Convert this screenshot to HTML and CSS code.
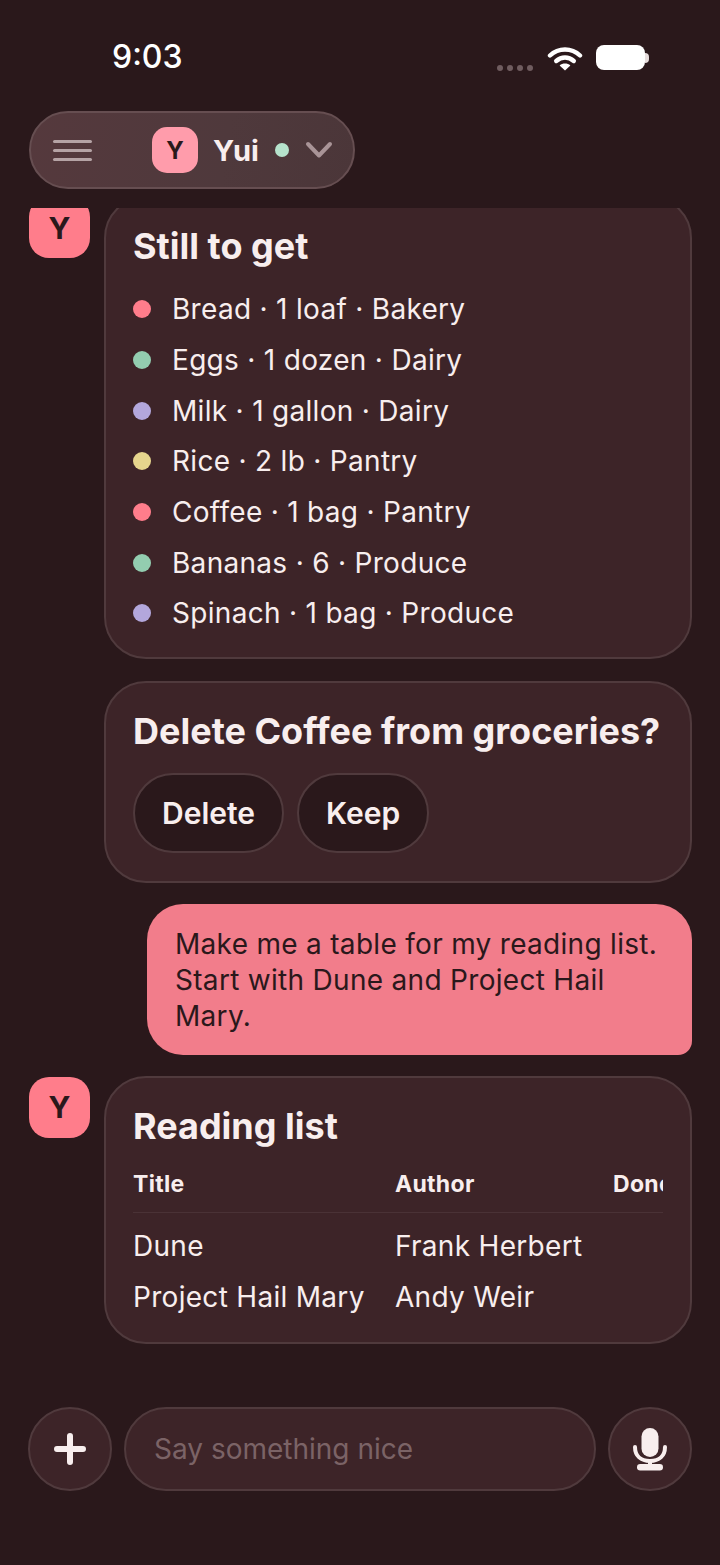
FILE: index.html
```html
<!DOCTYPE html>
<html lang="en">
<head>
    <meta charset="UTF-8">
    <meta name="viewport" content="width=device-width, initial-scale=1.0">
    <title>Yui</title>
    <link rel="stylesheet" href="styles.css">
</head>
<body>
    <div class="status-bar">
        <span class="time">9:03</span>
        <div class="status-icons">
            <div class="signal"><i></i><i></i><i></i><i></i></div>
            <svg class="wifi" width="36" height="26" viewBox="0 0 36 26">
                <path d="M3 10.5C11.5 2.5 24.5 2.5 33 10.5" fill="none" stroke="#fff" stroke-width="4.4" stroke-linecap="round"/>
                <path d="M9.2 16C14.5 11.3 21.5 11.3 26.8 16" fill="none" stroke="#fff" stroke-width="4.4" stroke-linecap="round"/>
                <path d="M18 25.5L12.6 20.4C15.6 17.9 20.4 17.9 23.4 20.4Z" fill="#fff"/>
            </svg>
            <div class="battery"><div class="battery-body"></div><div class="battery-nub"></div></div>
        </div>
    </div>

    <header class="top-bar">
        <div class="pill">
            <div class="menu-icon"><i></i><i></i><i></i></div>
            <div class="persona">
                <div class="persona-avatar">Y</div>
                <span class="persona-name">Yui</span>
                <span class="online-dot"></span>
                <svg class="chevron" width="28" height="18" viewBox="0 0 28 18">
                    <path d="M3 3L14 14.5L25 3" fill="none" stroke="#a99497" stroke-width="4" stroke-linecap="round" stroke-linejoin="round"/>
                </svg>
            </div>
        </div>
    </header>

    <main class="thread">
        <div class="thread-inner">
            <div class="msg">
                <div class="avatar">Y</div>
                <div class="card">
                    <h2>Still to get</h2>
                    <ul class="items">
                        <li><span class="bullet red"></span>Bread · 1 loaf · Bakery</li>
                        <li><span class="bullet green"></span>Eggs · 1 dozen · Dairy</li>
                        <li><span class="bullet purple"></span>Milk · 1 gallon · Dairy</li>
                        <li><span class="bullet yellow"></span>Rice · 2 lb · Pantry</li>
                        <li><span class="bullet red"></span>Coffee · 1 bag · Pantry</li>
                        <li><span class="bullet green"></span>Bananas · 6 · Produce</li>
                        <li><span class="bullet purple"></span>Spinach · 1 bag · Produce</li>
                    </ul>
                </div>
            </div>

            <div class="msg no-avatar">
                <div class="card">
                    <h2>Delete Coffee from groceries?</h2>
                    <div class="actions">
                        <button class="action">Delete</button>
                        <button class="action">Keep</button>
                    </div>
                </div>
            </div>

            <div class="bubble">Make me a table for my reading list. Start with Dune and Project Hail Mary.</div>

            <div class="msg">
                <div class="avatar">Y</div>
                <div class="card">
                    <h2>Reading list</h2>
                    <div class="table">
                        <div class="table-row table-head">
                            <span>Title</span><span>Author</span><span>Done</span>
                        </div>
                        <div class="table-row">
                            <span>Dune</span><span>Frank Herbert</span><span></span>
                        </div>
                        <div class="table-row">
                            <span>Project Hail Mary</span><span>Andy Weir</span><span></span>
                        </div>
                    </div>
                </div>
            </div>
        </div>
    </main>

    <footer class="composer">
        <button class="round-btn">
            <svg width="32" height="32" viewBox="0 0 32 32">
                <path d="M16 3V29M3 16H29" fill="none" stroke="#f8eeee" stroke-width="6" stroke-linecap="round"/>
            </svg>
        </button>
        <div class="input">Say something nice</div>
        <button class="round-btn">
            <svg width="36" height="44" viewBox="0 0 36 44">
                <rect x="9.5" y="1" width="17" height="29" rx="8.5" fill="#f8eeee"/>
                <path d="M3 20C3 29 9 34 18 34C27 34 33 29 33 20" fill="none" stroke="#f8eeee" stroke-width="4" stroke-linecap="round"/>
                <rect x="16" y="33" width="4" height="6" fill="#f8eeee"/>
                <rect x="5" y="37" width="26" height="6.5" rx="3.2" fill="#f8eeee"/>
            </svg>
        </button>
    </footer>
</body>
</html>
```

FILE: styles.css
```css
* {
    margin: 0;
    padding: 0;
    box-sizing: border-box;
}

body {
    width: 720px;
    height: 1565px;
    overflow: hidden;
    display: flex;
    flex-direction: column;
    background-color: #2a181b;
    color: #f8eeee;
    font-family: 'Inter', sans-serif;
    font-size: 28px;
}

/* Status bar */
.status-bar {
    height: 111px;
    padding: 39px 71px 0 112px;
    display: flex;
    justify-content: space-between;
    align-items: flex-start;
}

.time {
    font-size: 32px;
    line-height: 36px;
    font-weight: 500;
    color: #fff;
}

.status-icons {
    display: flex;
    align-items: flex-start;
    padding-top: 6px;
}

.signal {
    display: flex;
    gap: 4px;
    margin-top: 20px;
    margin-right: 14px;
}

.signal i {
    width: 6px;
    height: 6px;
    border-radius: 50%;
    background-color: #6f5c5f;
}

.wifi {
    margin-right: 13px;
}

.battery {
    display: flex;
    align-items: center;
}

.battery-body {
    width: 49px;
    height: 25px;
    border-radius: 8px;
    background-color: #fff;
}

.battery-nub {
    width: 4px;
    height: 10px;
    border-radius: 0 5px 5px 0;
    background-color: #e6dcdc;
}

/* Header pill */
.top-bar {
    height: 97px;
    padding-left: 29px;
}

.pill {
    width: 326px;
    height: 78px;
    display: flex;
    align-items: center;
    padding-left: 22px;
    border-radius: 39px;
    border: 2px solid #664e51;
    background: linear-gradient(100deg, #55393d, #4f393c 60%, #4b3639);
}

.menu-icon {
    flex: none;
    width: 39px;
    display: flex;
    flex-direction: column;
    gap: 6px;
}

.menu-icon i {
    height: 3px;
    border-radius: 2px;
    background-color: #b5a3a5;
}

.persona {
    flex: none;
    display: flex;
    align-items: center;
    margin-left: 60px;
}

.persona-avatar {
    width: 46px;
    height: 46px;
    border-radius: 15px;
    display: flex;
    align-items: center;
    justify-content: center;
    background-color: #ff9cab;
    color: #2a181b;
    font-size: 24px;
    font-weight: 700;
}

.persona-name {
    margin-left: 15px;
    font-size: 29px;
    font-weight: 700;
}

.online-dot {
    width: 14px;
    height: 14px;
    margin-left: 16px;
    border-radius: 50%;
    background-color: #b6e3cc;
}

.chevron {
    margin-left: 16px;
}

/* Chat thread */
.thread {
    flex: 1;
    overflow: hidden;
}

.thread-inner {
    margin-top: -12px;
    padding: 0 28px 0 29px;
    display: flex;
    flex-direction: column;
    gap: 22px;
}

.msg {
    display: flex;
    gap: 14px;
    align-items: flex-start;
}

.no-avatar {
    padding-left: 75px;
}

.avatar {
    flex: none;
    width: 61px;
    height: 61px;
    margin-top: 1px;
    border-radius: 20px;
    display: flex;
    align-items: center;
    justify-content: center;
    background-color: #ff7d8b;
    color: #2a181b;
    font-size: 30px;
    font-weight: 700;
}

.card {
    flex: 1;
    min-width: 0;
    padding: 26px 27px 28px;
    border-radius: 42px;
    border: 2px solid #503a3d;
    background-color: #3d2428;
    letter-spacing: 0.3px;
}

.card h2 {
    font-size: 36px;
    line-height: 44px;
    font-weight: 700;
    letter-spacing: 0;
}

.items {
    list-style: none;
    margin-top: 16px;
    margin-bottom: -10px;
}

.items li {
    height: 50.67px;
    display: flex;
    align-items: center;
    gap: 21px;
}

.bullet {
    width: 18px;
    height: 18px;
    border-radius: 50%;
}

.red { background-color: #ff7d8b; }
.green { background-color: #93cdb0; }
.purple { background-color: #b3a7dc; }
.yellow { background-color: #e6d58d; }

.actions {
    display: flex;
    gap: 13px;
    margin-top: 20px;
}

.action {
    height: 80px;
    padding: 0 27px;
    border-radius: 40px;
    border: 2px solid #503a3d;
    background-color: #2a181b;
    color: #f8eeee;
    font-family: inherit;
    font-size: 30px;
    font-weight: 600;
}

.bubble {
    margin: -1px 0 -1px 118px;
    padding: 22px 28px 21px;
    border-radius: 36px 36px 14px 36px;
    background-color: #f27d8b;
    color: #2a181b;
    line-height: 36px;
    letter-spacing: 0.3px;
}

/* Reading list table */
.table {
    margin-top: 8px;
    margin-bottom: -9px;
    overflow: hidden;
}

.table-row {
    display: grid;
    grid-template-columns: 262px 218px 60px;
    height: 51px;
    align-items: center;
    white-space: nowrap;
}

.table-head {
    height: 57px;
    margin-bottom: 8px;
    border-bottom: 1px solid #4a3236;
    font-size: 23px;
    font-weight: 700;
}

/* Composer */
.composer {
    height: 158px;
    padding: 0 28px;
    display: flex;
    gap: 12px;
}

.round-btn {
    flex: none;
    width: 84px;
    height: 84px;
    border-radius: 50%;
    border: 2px solid #503a3d;
    background-color: #3d2428;
    display: flex;
    align-items: center;
    justify-content: center;
}

.input {
    flex: 1;
    height: 84px;
    padding: 0 28px;
    display: flex;
    align-items: center;
    border-radius: 42px;
    border: 2px solid #503a3d;
    background-color: #3d2428;
    color: #7b6366;
}
```
